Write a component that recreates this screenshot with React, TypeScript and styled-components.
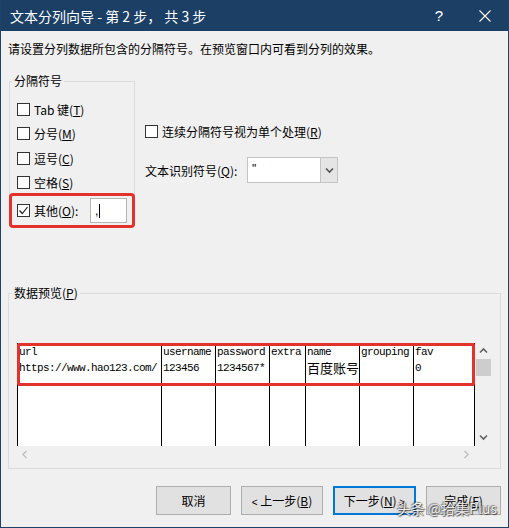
import styled, { createGlobalStyle } from 'styled-components';

const GlobalStyle = createGlobalStyle`
  html, body {
    margin: 0;
    padding: 0;
    background: #f0f0f0;
  }
  body {
    font-family: "Noto Sans CJK SC", "Noto Sans", sans-serif;
    font-size: 12px;
    color: #000;
  }
  * {
    box-sizing: border-box;
  }
`;

const Window = styled.div`
  position: relative;
  width: 509px;
  height: 528px;
  display: flex;
  flex-direction: column;
  border: 1px solid #1f416a;
  border-top: none;
  background: #f0f0f0;
`;

const TitleBar = styled.div`
  height: 31px;
  flex: 0 0 31px;
  background: #1c3f66;
  color: #fff;
  display: flex;
  align-items: center;
  padding-left: 9px;
  font-size: 14px;
`;

const TitleText = styled.div`
  flex: 1;
  white-space: pre;
`;

const TitleButton = styled.div`
  width: 46px;
  height: 31px;
  display: flex;
  align-items: center;
  justify-content: center;
  font-family: "Liberation Sans", sans-serif;
  font-size: 15px;
`;

const Body = styled.div`
  flex: 1;
  padding: 10px 7px 0 7px;
  display: flex;
  flex-direction: column;
`;

const Intro = styled.div`
  line-height: 16px;
`;

const TopSection = styled.div`
  display: flex;
  margin-top: 16px;
  align-items: flex-start;
`;

const Group = styled.fieldset<{ $width: number }>`
  margin: 0;
  padding: 0;
  width: ${p => p.$width}px;
  border: 1px solid #dcdcdc;
  min-width: 0;
`;

const SeparatorGroup = styled(Group)`
  margin-left: 1px;
`;

const Legend = styled.legend<{ $offset: number }>`
  padding: 0 2px;
  margin-left: ${p => p.$offset}px;
  line-height: 16px;
  font-size: 12px;
`;

const Options = styled.div`
  padding-top: 8px;
`;

const OptionRow = styled.div`
  height: 24.5px;
  display: flex;
  align-items: center;
  gap: 4px;
  padding-left: 7px;
`;

const OtherRow = styled.div`
  height: 35px;
  margin: -2px -1px -3px -1px;
  border: 3px solid #e3312c;
  border-radius: 4px;
  display: flex;
  align-items: center;
  gap: 4px;
  padding: 0 5px 0 5px;
`;

const Box = styled.span`
  width: 13px;
  height: 13px;
  flex: 0 0 13px;
  border: 1px solid #333;
  background: #fff;
  display: inline-flex;
  align-items: center;
  justify-content: center;
`;

const Key = styled.span`
  text-decoration: underline;
`;

const TextInput = styled.div`
  margin-left: auto;
  width: 37px;
  height: 25px;
  border: 1px solid #b4b4b4;
  background: #fff;
  display: flex;
  align-items: center;
  padding-left: 4px;
  font-family: "Liberation Sans", sans-serif;
`;

const Caret = styled.span`
  display: inline-block;
  width: 1px;
  height: 14px;
  background: #000;
  margin-left: 1px;
`;

const RightColumn = styled.div`
  margin-left: 10px;
  padding-top: 50px;
  display: flex;
  flex-direction: column;
`;

const CheckLine = styled.div`
  height: 16px;
  display: flex;
  align-items: center;
  gap: 4px;
`;

const ComboLine = styled.div`
  margin-top: 18px;
  height: 26px;
  display: flex;
  align-items: center;
`;

const ComboLabel = styled.span`
  width: 102px;
`;

const Combo = styled.div`
  width: 91px;
  height: 26px;
  border: 1px solid #c4c4c4;
  background: #fff;
  display: flex;
`;

const ComboValue = styled.div`
  flex: 1;
  padding-left: 4px;
  line-height: 22px;
  font-family: "Liberation Sans", sans-serif;
`;

const ComboButton = styled.div`
  width: 17px;
  background: #e5e5e5;
  border-left: 1px solid #c4c4c4;
  display: flex;
  align-items: center;
  justify-content: center;
`;

const PreviewGroup = styled(Group)`
  margin-top: 59px;
`;

const PreviewBox = styled.div`
  position: relative;
  margin: 42px 0 5px 8px;
  width: 475px;
  display: grid;
  grid-template-columns: 458px 17px;
  grid-template-rows: 103px 17px;
`;

const Table = styled.div`
  background: #fff;
  display: flex;
`;

const Column = styled.div<{ $width: number; $last?: boolean }>`
  width: ${p => p.$width}px;
  flex: 0 0 ${p => p.$width}px;
  border-left: 1px solid #000;
  border-right: ${p => (p.$last ? '1px solid #000' : 'none')};
  padding: 1px 0 0 1px;
  overflow: hidden;
`;

const Cell = styled.div`
  height: 16px;
  line-height: 16px;
  font-family: "Liberation Mono", "Noto Sans CJK SC", monospace;
  font-size: 11px;
  letter-spacing: -0.6px;
  white-space: nowrap;
`;

const CjkCell = styled(Cell)`
  font-family: "Noto Sans CJK SC", sans-serif;
  font-size: 13px;
  letter-spacing: 0;
`;

const Highlight = styled.div`
  position: absolute;
  left: 0;
  top: 0;
  width: 458px;
  height: 43px;
  border: 3px solid #e3312c;
  border-radius: 2px;
  pointer-events: none;
`;

const VScroll = styled.div`
  display: flex;
  flex-direction: column;
  background: #f0f0f0;
`;

const HScroll = styled.div`
  display: flex;
  justify-content: space-between;
  background: #f0f0f0;
`;

const Arrow = styled.div`
  width: 17px;
  height: 17px;
  display: flex;
  align-items: center;
  justify-content: center;
`;

const Thumb = styled.div`
  height: 17px;
  margin: -1px 1px 0 1px;
  background: #cdcdcd;
`;

const Spacer = styled.div`
  flex: 1;
`;

const Corner = styled.div`
  background: #f0f0f0;
`;

const ButtonRow = styled.div`
  margin-top: 17px;
  display: flex;
  justify-content: flex-end;
  gap: 10px;
`;

const Button = styled.div<{ $width: number; $default?: boolean }>`
  width: ${p => p.$width}px;
  height: 29px;
  background: #e1e1e1;
  border: ${p => (p.$default ? '2px solid #0078d7' : '1px solid #adadad')};
  display: flex;
  align-items: center;
  justify-content: center;
  white-space: pre;
`;

const Small = styled.span`
  font-family: "Liberation Sans", sans-serif;
  font-size: 10px;
`;

const Watermark = styled.div`
  position: absolute;
  right: 11px;
  bottom: 9px;
  font-size: 14px;
  color: rgba(255, 255, 255, 0.92);
  text-shadow: 0 0 1px #444, 1px 1px 1px rgba(0, 0, 0, 0.6), -1px -1px 1px rgba(0, 0, 0, 0.35);
  white-space: nowrap;
`;

const Chevron = ({ dir, color }: { dir: 'up' | 'down' | 'left' | 'right'; color: string }) => {
  const pts = {
    up: '1,5.5 4.5,2 8,5.5',
    down: '1,2.5 4.5,6 8,2.5',
    left: '5.5,1 2,4.5 5.5,8',
    right: '2.5,1 6,4.5 2.5,8',
  }[dir];
  return (
    <svg width="9" height="9" viewBox="0 0 9 9">
      <polyline points={pts} fill="none" stroke={color} strokeWidth="1.6" />
    </svg>
  );
};

const Check = () => (
  <svg width="11" height="11" viewBox="0 0 11 11">
    <polyline points="1.5,5.5 4.3,8.5 9.5,2" fill="none" stroke="#222" strokeWidth="1.2" />
  </svg>
);

const columns = [
  { w: 144, head: 'url', value: 'https://www.hao123.com/' },
  { w: 54, head: 'username', value: '123456' },
  { w: 54, head: 'password', value: '1234567*' },
  { w: 36, head: 'extra', value: '' },
  { w: 54, head: 'name', value: '百度账号', cjk: true },
  { w: 54, head: 'grouping', value: '' },
  { w: 62, head: 'fav', value: '0' },
];

export default function App() {
  return (
    <>
      <GlobalStyle />
      <Window>
        <TitleBar>
          <TitleText>文本分列向导 - 第 2 步， 共 3 步</TitleText>
          <TitleButton>?</TitleButton>
          <TitleButton>
            <svg width="12" height="12" viewBox="0 0 12 12">
              <path d="M0.5 0.5 L11.5 11.5 M11.5 0.5 L0.5 11.5" stroke="#fff" strokeWidth="1.1" />
            </svg>
          </TitleButton>
        </TitleBar>
        <Body>
          <Intro>请设置分列数据所包含的分隔符号。在预览窗口内可看到分列的效果。</Intro>
          <TopSection>
            <SeparatorGroup $width={126}>
              <Legend $offset={2}>分隔符号</Legend>
              <Options>
                <OptionRow>
                  <Box />
                  <span>Tab 键(<Key>T</Key>)</span>
                </OptionRow>
                <OptionRow>
                  <Box />
                  <span>分号(<Key>M</Key>)</span>
                </OptionRow>
                <OptionRow>
                  <Box />
                  <span>逗号(<Key>C</Key>)</span>
                </OptionRow>
                <OptionRow>
                  <Box />
                  <span>空格(<Key>S</Key>)</span>
                </OptionRow>
                <OtherRow>
                  <Box><Check /></Box>
                  <span>其他(<Key>O</Key>):</span>
                  <TextInput>,<Caret /></TextInput>
                </OtherRow>
              </Options>
            </SeparatorGroup>
            <RightColumn>
              <CheckLine>
                <Box />
                <span>连续分隔符号视为单个处理(<Key>R</Key>)</span>
              </CheckLine>
              <ComboLine>
                <ComboLabel>文本识别符号(<Key>Q</Key>):</ComboLabel>
                <Combo>
                  <ComboValue>"</ComboValue>
                  <ComboButton><Chevron dir="down" color="#555" /></ComboButton>
                </Combo>
              </ComboLine>
            </RightColumn>
          </TopSection>
          <PreviewGroup $width={493}>
            <Legend $offset={3}>数据预览(<Key>P</Key>)</Legend>
            <PreviewBox>
              <Table>
                {columns.map((c, i) => (
                  <Column key={c.head} $width={c.w} $last={i === columns.length - 1}>
                    <Cell>{c.head}</Cell>
                    {c.cjk ? <CjkCell>{c.value}</CjkCell> : <Cell>{c.value}</Cell>}
                  </Column>
                ))}
              </Table>
              <VScroll>
                <Arrow><Chevron dir="up" color="#606060" /></Arrow>
                <Thumb />
                <Spacer />
                <Arrow><Chevron dir="down" color="#606060" /></Arrow>
              </VScroll>
              <HScroll>
                <Arrow><Chevron dir="left" color="#c2c2c2" /></Arrow>
                <Arrow><Chevron dir="right" color="#c2c2c2" /></Arrow>
              </HScroll>
              <Corner />
              <Highlight />
            </PreviewBox>
          </PreviewGroup>
          <ButtonRow>
            <Button $width={75}>取消</Button>
            <Button $width={82}>
              <span><Small>&lt;</Small> 上一步(<Key>B</Key>)</span>
            </Button>
            <Button $width={83} $default>
              <span>下一步(<Key>N</Key>) <Small>&gt;</Small></span>
            </Button>
            <Button $width={75}>
              <span>完成(<Key>F</Key>)</span>
            </Button>
          </ButtonRow>
        </Body>
        <Watermark>头条 @拾集Plus</Watermark>
      </Window>
    </>
  );
}
